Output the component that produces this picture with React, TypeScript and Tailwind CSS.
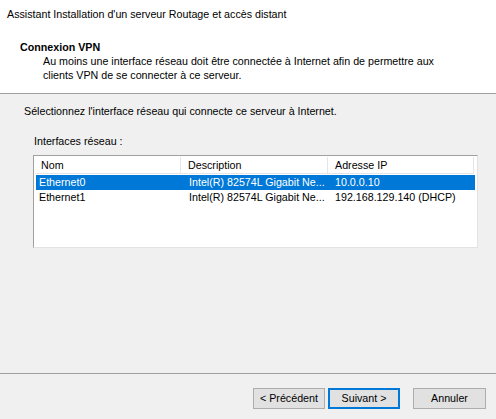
const rows = [
  { name: 'Ethernet0', desc: 'Intel(R) 82574L Gigabit Ne...', ip: '10.0.0.10', selected: true },
  { name: 'Ethernet1', desc: 'Intel(R) 82574L Gigabit Ne...', ip: '192.168.129.140 (DHCP)', selected: false },
];

function WizButton({ label, primary, width }: { label: string; primary?: boolean; width: string }) {
  return (
    <button
      className={`${width} h-[21px] flex items-center justify-center bg-[#e1e1e1] text-black leading-none ${
        primary ? 'border-2 border-[#0078d7]' : 'border border-[#adadad]'
      }`}
    >
      {label}
    </button>
  );
}

export default function App() {
  return (
    <div
      className="w-[496px] h-[419px] bg-[#f0f0f0] flex flex-col text-black text-[10.7px] overflow-hidden whitespace-nowrap"
      style={{ fontFamily: '"Liberation Sans", Arial, sans-serif' }}
    >
      {/* header */}
      <div className="h-[94px] bg-white border-b border-[#a0a0a0] shrink-0">
        <div className="pt-[7px] pl-[7px] leading-[14px]">
          Assistant Installation d'un serveur Routage et accès distant
        </div>
        <div className="mt-[19px] pl-[20px] leading-[14px] font-bold">Connexion VPN</div>
        <div className="pl-[43px] leading-[14px]">
          Au moins une interface réseau doit être connectée à Internet afin de permettre aux
          <br />
          clients VPN de se connecter à ce serveur.
        </div>
      </div>

      {/* body */}
      <div className="flex-1 flex flex-col">
        <div className="pt-[10px] pl-[24px] leading-[14px]">
          Sélectionnez l'interface réseau qui connecte ce serveur à Internet.
        </div>
        <div className="mt-[16px] pl-[34px] leading-[14px]">Interfaces réseau :</div>

        <div className="mt-[7px] ml-[33px] w-[445px] h-[93px] bg-white border-t border-l border-b border-r border-t-[#a0a0a0] border-l-[#a0a0a0] border-b-[#e3e3e3] border-r-[#e3e3e3]">
          <div className="ml-[1px] mt-[1px] flex h-[17px] border-b border-[#e5e5e5] w-[439px]">
            <div className="w-[146px] pl-[6px] border-r border-[#e5e5e5] flex items-center">Nom</div>
            <div className="w-[147px] pl-[7px] border-r border-[#e5e5e5] flex items-center">Description</div>
            <div className="w-[146px] pl-[7px] border-r border-[#e5e5e5] flex items-center">Adresse IP</div>
          </div>
          <div className="mt-[1px]">
            {rows.map((r) => (
              <div
                key={r.name}
                className={`flex h-[15px] items-center ml-[2px] w-[439px] pl-[3px] ${
                  r.selected ? 'bg-[#0078d7] text-white' : ''
                }`}
              >
                <div className="w-[150px]">{r.name}</div>
                <div className="w-[146px]">{r.desc}</div>
                <div>{r.ip}</div>
              </div>
            ))}
          </div>
        </div>

        {/* footer */}
        <div className="mt-auto border-t border-[#a0a0a0] h-[46px] flex justify-end pt-[14px] pr-[10px]">
          <WizButton label="< Précédent" width="w-[72px]" />
          <div className="ml-[3px]">
            <WizButton label="Suivant >" width="w-[72px]" primary />
          </div>
          <div className="ml-[13px]">
            <WizButton label="Annuler" width="w-[73px]" />
          </div>
        </div>
      </div>
    </div>
  );
}
